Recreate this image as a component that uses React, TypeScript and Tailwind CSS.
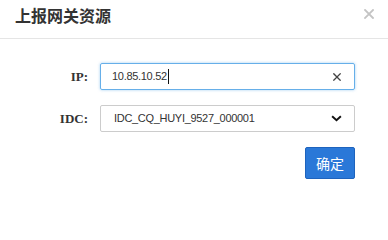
import React from 'react';

const cjk = { fontFamily: '"Noto Sans CJK SC", "Noto Sans", sans-serif' };

function CloseIcon({ className }: { className?: string }) {
  return (
    <svg viewBox="0 0 10 10" className={className} fill="none" stroke="currentColor" strokeLinecap="square">
      <path d="M1 1L9 9M9 1L1 9" />
    </svg>
  );
}

function FieldRow({ label, children }: { label: string; children: React.ReactNode }) {
  return (
    <div className="flex items-center">
      <label className="w-[88px] text-right text-[13px] font-bold text-[#333] font-['Liberation_Serif',serif]">
        {label}
      </label>
      <div className="ml-[12px] w-[255px]">{children}</div>
    </div>
  );
}

export default function App() {
  return (
    <div className="w-[388px] h-[216px] bg-white">
      {/* header */}
      <div className="flex h-[39px] items-start justify-between border-b border-[#e5e5e5] pl-[15px] pr-[14px] pt-[4px]">
        <h3 className="text-[16px] font-bold leading-[22px] text-[#333]" style={cjk}>
          上报网关资源
        </h3>
        <CloseIcon className="mt-[5px] h-[10px] w-[10px] stroke-[1.8] text-[#c4c4c4]" />
      </div>

      {/* form */}
      <div className="flex flex-col gap-[15px] pt-[24px] font-['Liberation_Sans',sans-serif]">
        <FieldRow label="IP:">
          <div className="flex h-[27px] items-center rounded-[2px] border border-[#66afe9] pl-[11px] pr-[13px] shadow-[0_0_3px_rgba(102,175,233,0.6)]">
            <span className="text-[11px] tracking-[-0.3px] text-[#333]">10.85.10.52</span>
            <span className="ml-px h-[15px] w-px bg-[#111]" />
            <CloseIcon className="ml-auto h-[8px] w-[8px] stroke-[1.6] text-[#444]" />
          </div>
        </FieldRow>
        <FieldRow label="IDC:">
          <div className="flex h-[27px] items-center rounded-[2px] border border-[#ccc] pl-[13px] pr-[12px]">
            <span className="text-[11px] tracking-[-0.3px] text-[#333]">IDC_CQ_HUYI_9527_000001</span>
            <svg viewBox="0 0 12 8" className="ml-auto h-[7px] w-[11px]" fill="none" stroke="#111" strokeWidth="2.2">
              <path d="M1 1.5L6 6L11 1.5" />
            </svg>
          </div>
        </FieldRow>
        <div className="flex justify-end pr-[33px]">
          <button
            className="h-[32px] w-[50px] rounded-[2px] border border-[#1e63bd] bg-[#2a78d8] text-[14px] text-white"
            style={cjk}
          >
            确定
          </button>
        </div>
      </div>
    </div>
  );
}
